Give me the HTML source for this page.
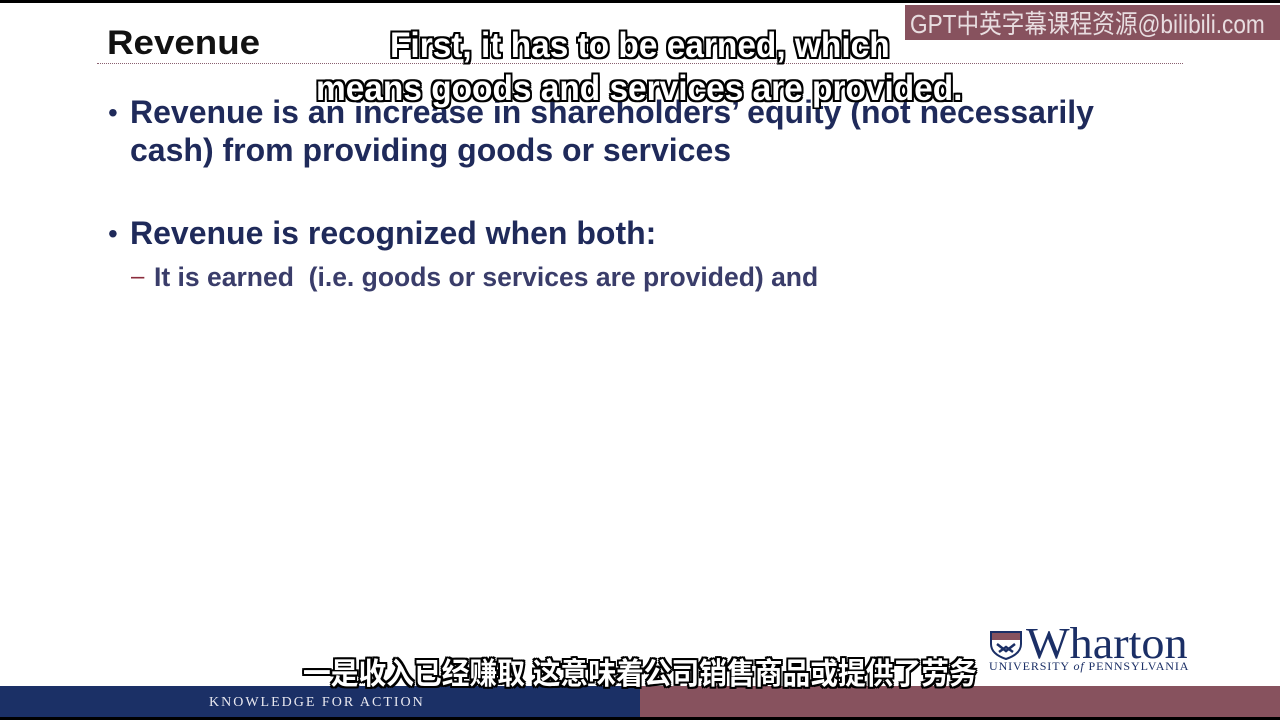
<!DOCTYPE html>
<html><head><meta charset="utf-8"><style>
body{margin:0;width:1280px;height:720px;position:relative;overflow:hidden;background:#fff;font-family:"Liberation Sans",Arial,sans-serif}
.a{position:absolute;white-space:nowrap}
.n{transform-origin:0 0;display:inline-block}
.sub{color:#fff;font-weight:bold;text-shadow:-2px 0 #000,2px 0 #000,0 -2px #000,0 2px #000,-2px -2px #000,2px 2px #000,-2px 2px #000,2px -2px #000}
</style></head><body>
<div class="a" style="left:0;top:0;width:1280px;height:3px;background:#000"></div>
<div class="a" style="left:905px;top:5px;width:375px;height:35px;background:#87525e"></div>
<div class="a" style="left:910px;top:4px;color:#e8dde0;font-size:26px;font-family:'Liberation Sans','Noto Sans CJK SC',sans-serif"><span class="n" style="transform:scaleX(0.87)">GPT中英字幕课程资源@bilibili.com</span></div>
<div class="a" style="left:107px;top:24px;font-size:34px;font-weight:bold;color:#111"><span class="n" style="transform:scaleX(1.08)">Revenue</span></div>
<div class="a" style="left:97px;top:63px;width:1086px;border-top:1px dotted #8a6070"></div>
<div class="a" style="left:130px;top:93px;font-size:32px;font-weight:bold;color:#1f2a5a;line-height:38px">Revenue is an increase in shareholders’ equity (not necessarily<br>cash) from providing goods or services</div>
<div class="a" style="left:108px;top:94px;font-size:28px;color:#1f2a5a;line-height:38px">•</div>
<div class="a" style="left:108px;top:215px;font-size:28px;color:#1f2a5a;line-height:38px">•</div>
<div class="a" style="left:130px;top:214px;font-size:32px;font-weight:bold;color:#1f2a5a;line-height:38px">Revenue is recognized when both:</div>
<div class="a" style="left:131px;top:262px;font-size:24px;color:#8b2c3c;line-height:30px">–</div>
<div class="a" style="left:154px;top:262px;font-size:26.5px;font-weight:bold;color:#3a3d6a;line-height:30px">It is earned &nbsp;(i.e. goods or services are provided) and</div>
<div class="a sub" style="left:390px;top:26px;font-size:35px"><span class="n" style="transform:scaleX(0.955)">First, it has to be earned, which</span></div>
<div class="a sub" style="left:316px;top:69px;font-size:35px"><span class="n" style="transform:scaleX(0.955)">means goods and services are provided.</span></div>
<div class="a" style="left:990px;top:622px;color:#1b2f66;font-family:'Liberation Serif',serif;font-size:44px;line-height:44px;padding-left:36px"><span class="n" style="transform:scaleX(1.05)">Wharton</span></div>
<svg class="a" style="left:989px;top:630px" width="34" height="30" viewBox="0 0 34 30"><path d="M2 2H32V14Q32 24 17 29Q2 24 2 14Z" fill="#fff" stroke="#1b2f66" stroke-width="2"/><rect x="3" y="3" width="28" height="7" fill="#87525e"/><path d="M8 14L17 21L26 14M10 22L17 17L24 22" stroke="#1b2f66" stroke-width="2.5" fill="none"/></svg>
<div class="a" style="left:989px;top:659px;color:#1b2f66;font-family:'Liberation Serif',serif;font-size:12px;letter-spacing:0.9px">UNIVERSITY <i>of</i> PENNSYLVANIA</div>
<div class="a" style="left:0;top:686px;width:640px;height:31px;background:#1b3066"></div>
<div class="a" style="left:640px;top:686px;width:640px;height:31px;background:#87525e"></div>
<div class="a" style="left:0;top:717px;width:1280px;height:3px;background:#000"></div>
<div class="a" style="left:209px;top:695px;color:#e8e8f0;font-family:'Liberation Serif',serif;font-size:14px;letter-spacing:2px">KNOWLEDGE FOR ACTION</div>
<div class="a sub" style="left:303px;top:657px;font-size:30px;font-family:'Liberation Sans','Noto Sans CJK SC',sans-serif;line-height:36px"><span class="n" style="transform:scaleX(0.925)">一是收入已经赚取 这意味着公司销售商品或提供了劳务</span></div>
</body></html>
